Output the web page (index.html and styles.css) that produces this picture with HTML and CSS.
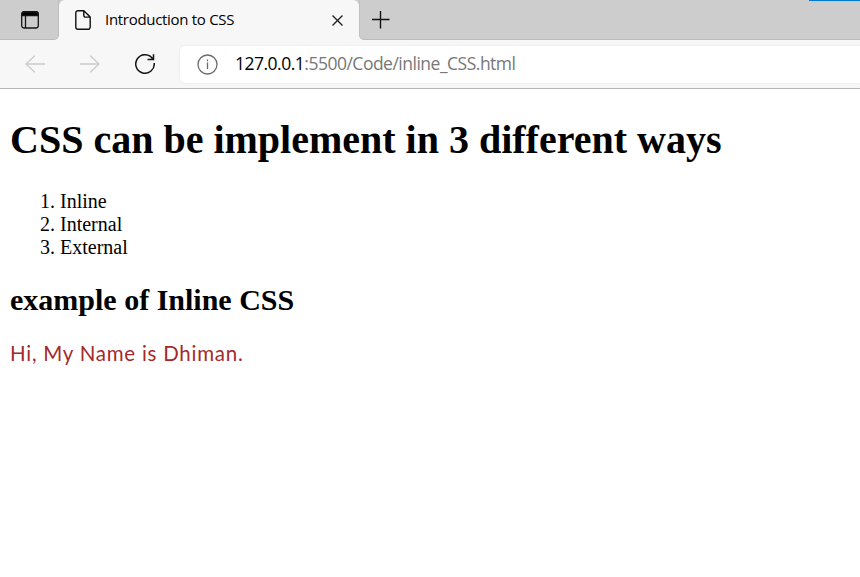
FILE: index.html
```html
<!DOCTYPE html>
<html lang="en">
<head>
<meta charset="utf-8">
<title>Introduction to CSS</title>
<link rel="stylesheet" href="styles.css">
</head>
<body>
<header class="browser">
  <div class="tabs">
    <div class="tab-actions">
      <svg width="18" height="18" viewBox="0 0 18 18" fill="none" stroke="#151515" stroke-width="1.3"><rect x=".7" y=".7" width="16.6" height="16.3" rx="2.5"/><path d="M4.5 5v12"/><path d="M1 4.700V3a2 2 0 0 1 2-2h12a2 2 0 0 1 2 2v1.700z" fill="#000"/></svg>
    </div>
    <div class="tab">
      <svg class="page-icon" width="16" height="20" viewBox="0 0 16 20" fill="none" stroke="#111" stroke-width="1.4" stroke-linejoin="round"><path d="M8.800.7H3A2.200 2.200 0 0 0 .8 2.900v14.200A2.200 2.200 0 0 0 3 19.300h10a2.200 2.200 0 0 0 2.200-2.200V7.100zM8.800.7v4.900a1.500 1.500 0 0 0 1.500 1.500h4.900"/></svg>
      <span class="tab-title">Introduction to CSS</span>
      <svg class="close" width="11" height="11" viewBox="0 0 11 11" fill="none" stroke="#222" stroke-width="1.4"><path d="M.5.5l10 10M10.500.5l-10 10"/></svg>
    </div>
    <div class="strip">
      <svg width="18" height="18" viewBox="0 0 18 18" fill="none" stroke="#111" stroke-width="1.4"><path d="M0 8.500h17.500M8.500 0v17.500"/></svg>
      <span class="accent"></span>
    </div>
  </div>
  <div class="toolbar">
    <svg class="back" width="20" height="18" viewBox="0 0 20 18" fill="none" stroke="#ccc" stroke-width="1.3"><path d="M20 9H1M9.800.7L1 9l8.800 8.300"/></svg>
    <svg class="forward" width="20" height="18" viewBox="0 0 20 18" fill="none" stroke="#ccc" stroke-width="1.3"><path d="M0 9h19M10.200.7L19 9l-8.800 8.300"/></svg>
    <svg class="reload" width="20" height="20" viewBox="0 0 20 20" fill="none" stroke="#151515" stroke-width="1.5"><path d="M17.800 5A9.250 9.250 0 1 0 19.200 9M18.500.2v5.300h-6"/></svg>
    <div class="address">
      <svg width="21" height="21" viewBox="0 0 21 21" fill="none" stroke="#6b6b6b" stroke-width="1.300"><circle cx="10.500" cy="10.500" r="9.500"/><path d="M10.500 8.500V15M10.500 5.500v1.700"/></svg>
      <span class="url"><b>127.0.0.1</b>:5500/Code/inline_CSS.html</span>
    </div>
  </div>
</header>
<main>
  <h1>CSS can be implement in 3 different ways</h1>
  <ol>
    <li>Inline</li>
    <li>Internal</li>
    <li>External</li>
  </ol>
  <h2>example of Inline CSS</h2>
  <p>Hi, My Name is Dhiman.</p>
</main>
</body>
</html>
```
FILE: styles.css
```css
* { box-sizing: border-box; }
body { margin: 0; height: 577px; overflow: hidden; background: #fff; color: #000; font-family: "Liberation Serif", serif; font-size: 20px; }
svg { display: block; flex: none; }
.browser { height: 89px; background: #f7f7f7; border-bottom: 1px solid #b5b5b5; font-family: "Open Sans", "Noto Sans", sans-serif; }
.tabs { display: flex; height: 40px; background: linear-gradient(#cdcdcd 50%, #f7f7f7 50%); }
.tab-actions { width: 59px; padding: 11px 0 0 21px; background: #cdcdcd; border-bottom: 1px solid #bbb; border-right: 1px solid #bfbfbf; border-radius: 0 0 5px 0; }
.tab { display: flex; align-items: center; width: 300px; padding: 0 16px; background: #f7f7f7; border-radius: 6px 6px 0 0; }
.tab-title { margin: -2px 0 0 14px; font-size: 15px; letter-spacing: -0.3px; white-space: nowrap; }
.close { margin-left: auto; }
.strip { flex: 1; display: flex; justify-content: space-between; padding: 11px 0 0 12px; background: #cdcdcd; border-bottom: 1px solid #bbb; border-left: 1px solid #bfbfbf; border-radius: 0 0 0 5px; }
.accent { width: 51px; height: 1px; margin-top: -11px; background: #0078d7; }
.toolbar { display: flex; align-items: center; height: 48px; padding-left: 25px; }
.forward { margin-left: 35px; }
.reload { margin-left: 35px; }
.address { display: flex; align-items: center; flex: 1; height: 37px; margin-left: 25px; padding-left: 17px; background: #fff; border-radius: 5px 0 0 5px; box-shadow: 0 0 3px #e4e4e4; }
.url { margin: -2px 0 0 17px; font-size: 17.5px; letter-spacing: -0.5px; color: #777; white-space: nowrap; }
.url b { font-weight: 400; color: #000; }
main { padding: 28px 10px 0; }
h1 { margin: 0; font-size: 40px; line-height: 46px; white-space: nowrap; }
ol { margin: 27px 0 0; padding-left: 50px; line-height: 23px; }
h2 { margin: 24px 0 0; font-size: 30px; line-height: 34px; }
p { margin: 20px 0 0; color: #a52a2a; font-family: Lato, sans-serif; font-size: 20.5px; line-height: 32px; letter-spacing: 0.75px; }
```
